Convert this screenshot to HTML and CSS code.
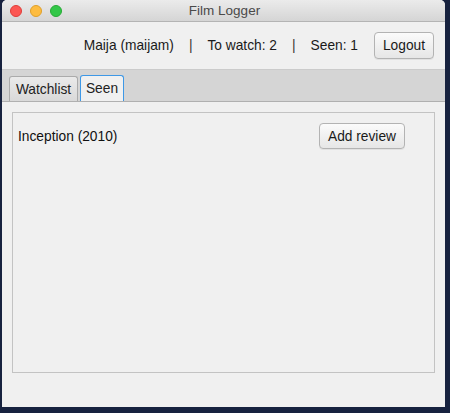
FILE: index.html
```html
<!DOCTYPE html>
<html>
<head>
<meta charset="utf-8">
<link rel="stylesheet" href="styles.css">
</head>
<body>
<div class="window">
  <div class="titlebar">
    <div class="lights">
      <span class="light red"></span>
      <span class="light yellow"></span>
      <span class="light green"></span>
    </div>
    <div class="title">Film Logger</div>
  </div>
  <div class="toolbar">
    <span>Maija (maijam)</span>
    <span class="sep">|</span>
    <span>To watch: 2</span>
    <span class="sep">|</span>
    <span>Seen: 1</span>
    <button class="btn logout">Logout</button>
  </div>
  <div class="tabs">
    <div class="tab">Watchlist</div>
    <div class="tab selected">Seen</div>
  </div>
  <div class="content">
    <div class="panel">
      <div class="row">
        <span class="film">Inception (2010)</span>
        <button class="btn add">Add review</button>
      </div>
    </div>
  </div>
</div>
</body>
</html>
```
FILE: styles.css
```css
html, body {
  margin: 0;
  padding: 0;
}
body {
  width: 450px;
  height: 413px;
  background: #17223f;
  font-family: "Liberation Sans", Arial, sans-serif;
  font-size: 13.75px;
  color: #1a1a1a;
  overflow: hidden;
}
.window {
  margin-left: 2px;
  width: 443px;
  height: 407px;
  border-radius: 5px 5px 0 0;
  overflow: hidden;
  background: #f0f0f0;
  display: flex;
  flex-direction: column;
}
.titlebar {
  position: relative;
  height: 21px;
  border-bottom: 1px solid #b4b4b4;
  background: linear-gradient(#ebebeb, #d5d5d5);
  display: flex;
  align-items: center;
  justify-content: center;
}
.lights {
  position: absolute;
  left: 8px;
  top: 5px;
  display: flex;
  gap: 8px;
}
.light {
  width: 12px;
  height: 12px;
  border-radius: 50%;
  box-sizing: border-box;
}
.red { background: #fc5753; border: 1px solid #df3d38; }
.yellow { background: #fdbc40; border: 1px solid #de9f29; }
.green { background: #33c748; border: 1px solid #27aa35; }
.title {
  color: #4a4a4a;
  font-size: 13.5px;
  margin-left: 2px;
}
.toolbar {
  height: 47px;
  display: flex;
  align-items: center;
  justify-content: flex-end;
  gap: 15px;
  padding-right: 11px;
  background: #f0f0f0;
}
.sep {
  color: #333;
}
.btn {
  font-family: "Liberation Sans", Arial, sans-serif;
  font-size: 13.75px;
  color: #1a1a1a;
  background: linear-gradient(#fbfbfb, #e6e6e6);
  border: 1px solid #b3b3b3;
  border-radius: 4px;
  padding: 0;
  box-shadow: 0 1px 0 rgba(0,0,0,0.06);
}
.logout {
  width: 60px;
  height: 27px;
  margin-left: 1px;
}
.tabs {
  height: 31px;
  background: #d5d5d5;
  border-top: 1px solid #cbcbcb;
  border-bottom: 1px solid #b0b0b0;
  display: flex;
  align-items: flex-end;
  gap: 2px;
  padding-left: 7px;
}
.tab {
  height: 25px;
  box-sizing: border-box;
  padding: 0 6px;
  display: flex;
  align-items: center;
  justify-content: center;
  border: 1px solid #ababab;
  border-bottom: none;
  border-radius: 3px 3px 0 0;
  background: linear-gradient(#eaeaea, #d9d9d9);
  color: #222;
}
.tab:first-child {
  width: 69px;
}
.tab.selected {
  width: 44px;
  height: 26px;
  background: #f0f0f0;
  border: 1px solid #3e98e6;
  border-bottom: none;
}
.content {
  flex: 1;
  padding: 10px 10px 0 10px;
  background: #f0f0f0;
}
.panel {
  height: 259px;
  border: 1px solid #c3c3c3;
  background: #f0f0f0;
}
.row {
  display: flex;
  align-items: center;
  padding: 10px 0 0 5px;
}
.film {
  color: #111;
}
.add {
  width: 86px;
  height: 26px;
  margin-left: auto;
  margin-right: 29px;
}
```
